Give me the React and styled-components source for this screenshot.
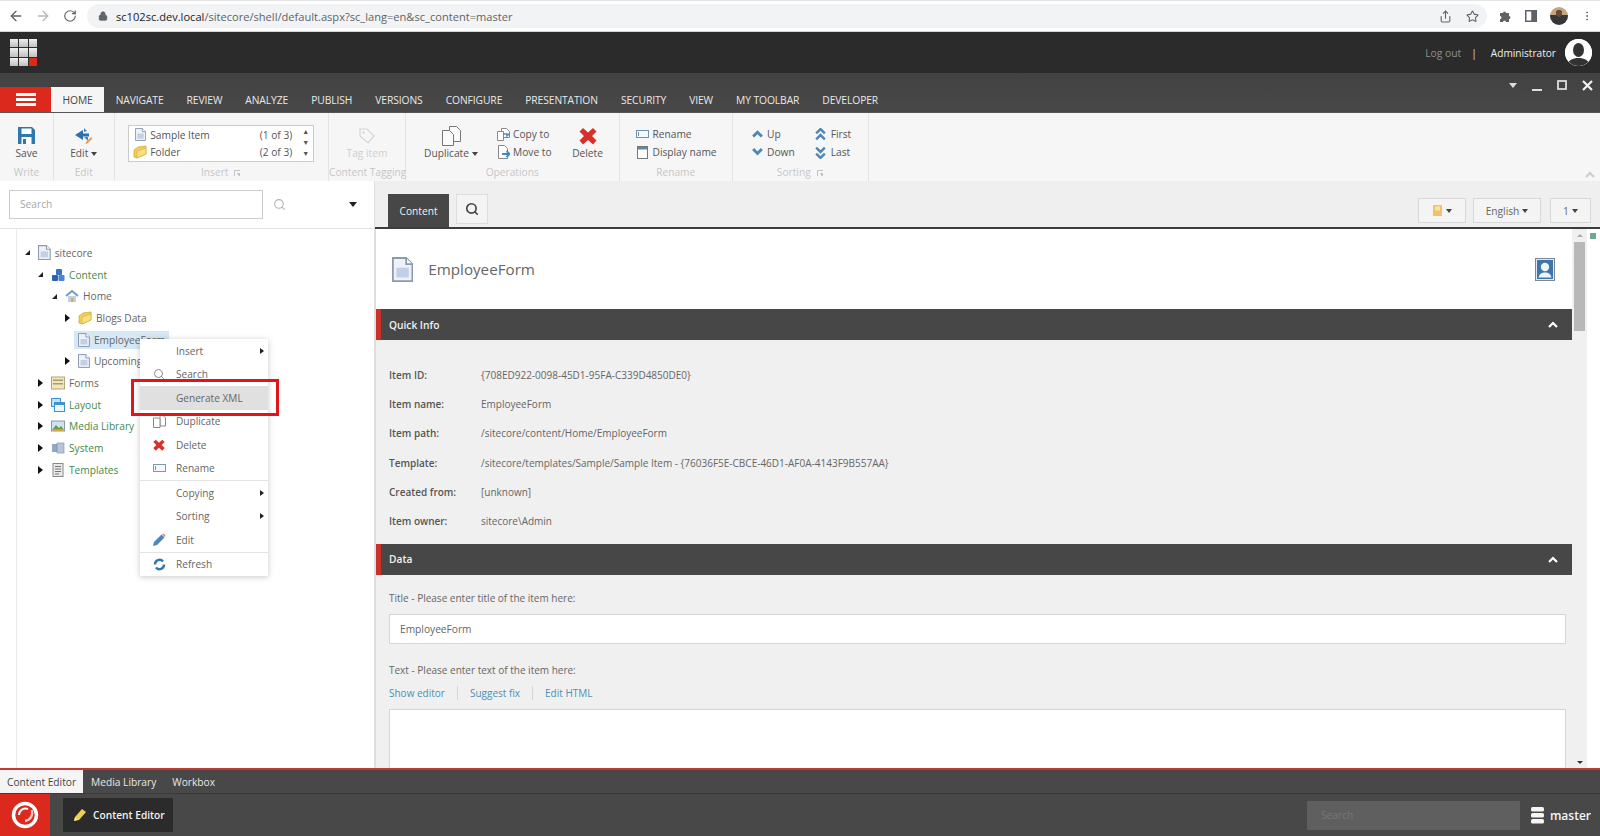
import React from "react";
import styled, { createGlobalStyle } from "styled-components";
import { ArrowLeft, ArrowRight, RotateCw, Share, Star, MoreVertical, Search as SearchIcon, Lock } from "lucide-react";

const GlobalStyle = createGlobalStyle`
  html, body { margin: 0; padding: 0; height: 836px; overflow: hidden; background: #fff; }
  body { font-family: "Open Sans", "Liberation Sans", sans-serif; color: #555; font-size: 10.2px; }
  * { box-sizing: border-box; }
`;

const Page = styled.div`
  width: 1600px;
  height: 836px;
  display: flex;
  flex-direction: column;
  overflow: hidden;
`;

/* browser chrome */
const BrowserBar = styled.div`
  height: 32px;
  flex: none;
  display: flex;
  align-items: center;
  background: #fff;
  border-top: 1px solid #e4e4e4;
  border-bottom: 1px solid #d5d5d5;
  padding: 0 0 0 2px;
  color: #5f6368;
`;
const NavBtn = styled.div`
  width: 27px;
  display: flex;
  justify-content: center;
  color: ${(p) => (p.$off ? "#b6b8bb" : "#5f6368")};
`;
const Address = styled.div`
  width: 1400px;
  height: 24px;
  margin-left: 4px;
  background: #f1f3f4;
  border-radius: 12px;
  display: flex;
  align-items: center;
  padding: 0 8px 0 11px;
  gap: 8px;
  font-size: 11.1px;
  color: #5f6368;
  b { font-weight: 400; color: #202124; }
`;
const Url = styled.span`
  flex: 1;
`;
const AddressIcons = styled.div`
  display: flex;
  gap: 14px;
  align-items: center;
`;
const BrowserTools = styled.div`
  display: flex;
  align-items: center;
  gap: 13px;
  padding-left: 12px;
`;
const Avatar = styled.div`
  width: 18px;
  height: 18px;
  border-radius: 50%;
  background: radial-gradient(circle at 50% 35%, #6b4a38 0 22%, transparent 23%), linear-gradient(180deg, #c4a77c 0 45%, #37363b 45% 100%);
`;

/* sitecore top */
const TopBar = styled.div`
  height: 41px;
  flex: none;
  background: #2b2b2b;
  display: flex;
  align-items: center;
  padding: 0 8px 0 10px;
  color: #e6e6e6;
`;
const AppGrid = styled.div`
  width: 27px;
  height: 27px;
  display: grid;
  grid-template-columns: repeat(3, 8.4px);
  grid-template-rows: repeat(3, 8.4px);
  gap: 1px;
`;
const AppTile = styled.div`
  background: ${(p) => (p.$red ? "#dc291e" : "linear-gradient(180deg, #efefef, #c0c0c0)")};
`;
const LogOut = styled.span`
  margin-left: auto;
  color: #8f8f8f;
  font-size: 10.3px;
`;
const Pipe = styled.span`
  margin: 0 14px 0 10px;
  color: #ddd;
`;
const UserName = styled.span`
  font-size: 10.1px;
  color: #eee;
`;
const UserPic = styled.div`
  width: 27px;
  height: 27px;
  margin-left: 9px;
  border-radius: 50%;
  overflow: hidden;
  background: #fff;
  svg { display: block; }
`;

const TabBar = styled.div`
  height: 40px;
  flex: none;
  background: linear-gradient(180deg, #424242, #484848);
  border-bottom: 1px solid #555;
  position: relative;
  display: flex;
  align-items: flex-end;
`;
const Hamburger = styled.div`
  width: 51px;
  height: 25px;
  background: #dc291e;
  display: flex;
  flex-direction: column;
  justify-content: center;
  align-items: center;
  gap: 2.5px;
  i { display: block; width: 20px; height: 2.5px; background: #fff; }
`;
const RibbonTab = styled.div`
  height: 25px;
  padding: 0 11.5px;
  display: flex;
  align-items: center;
  font-size: 10.3px;
  letter-spacing: -0.1px;
  white-space: nowrap;
  color: ${(p) => (p.$active ? "#444" : "#e8e8e8")};
  background: ${(p) => (p.$active ? "#f5f5f5" : "transparent")};
`;
const WindowControls = styled.div`
  position: absolute;
  right: 7px;
  top: 4px;
  display: flex;
  align-items: center;
  height: 16px;
  gap: 15px;
  color: #e8e8e8;
`;

/* ribbon */
const Ribbon = styled.div`
  height: 68px;
  flex: none;
  background: #f6f6f6;
  display: flex;
  position: relative;
`;
const Group = styled.div`
  width: ${(p) => p.$w}px;
  flex: none;
  border-right: 1px solid #e4e4e4;
  display: flex;
  flex-direction: column;
`;
const GroupBody = styled.div`
  height: 52px;
  display: flex;
  justify-content: ${(p) => p.$justify || "center"};
  padding: ${(p) => p.$pad || "0"};
  gap: ${(p) => p.$gap || 0}px;
`;
const GroupLabel = styled.div`
  height: 16px;
  font-size: 10.2px;
  color: #c6c6c6;
  text-align: center;
  white-space: nowrap;
  line-height: 15px;
  svg { margin-left: 6px; vertical-align: -1px; }
`;
const BigButton = styled.div`
  padding-top: 12px;
  margin-left: ${(p) => p.$ml || 0}px;
  width: ${(p) => p.$w || 50}px;
  flex: none;
  display: flex;
  flex-direction: column;
  align-items: center;
  font-size: 10.2px;
  color: ${(p) => (p.$faded ? "#cfcfcf" : "#555")};
  white-space: nowrap;
  span { line-height: 15px; }
`;
const BigIcon = styled.div`
  height: 21px;
  display: flex;
  align-items: center;
`;
const Caret = styled.i`
  display: inline-block;
  width: 0;
  height: 0;
  margin-left: 3px;
  vertical-align: 1px;
  border-left: ${(p) => p.$size || 3.5}px solid transparent;
  border-right: ${(p) => p.$size || 3.5}px solid transparent;
  border-top: ${(p) => (p.$size || 3.5) + 0.5}px solid ${(p) => p.$color || "#444"};
`;
const Gallery = styled.div`
  width: 186px;
  height: 37px;
  margin-top: 12px;
  background: #fff;
  border: 1px solid #ccc;
  padding: 0 4px 0 4px;
  display: flex;
`;
const GalleryList = styled.div`
  flex: 1;
`;
const GalleryRow = styled.div`
  height: 17.5px;
  display: flex;
  align-items: center;
  gap: 3px;
  font-size: 10.2px;
  em { margin-left: auto; font-style: normal; }
`;
const GalleryArrows = styled.div`
  width: 17px;
  display: flex;
  flex-direction: column;
  align-items: flex-end;
  font-size: 7px;
  line-height: 11px;
  color: #555;
`;
const SmallCol = styled.div`
  display: flex;
  flex-direction: column;
  padding-top: 12px;
  margin-left: ${(p) => p.$ml || 0}px;
`;
const SmallBtn = styled.div`
  height: 18px;
  display: flex;
  align-items: center;
  gap: 3px;
  font-size: 10.2px;
  color: #555;
  white-space: nowrap;
`;
const IconBox = styled.span`
  width: 14px;
  display: flex;
  justify-content: center;
  flex: none;
`;
const RibbonCollapse = styled.div`
  position: absolute;
  right: 5px;
  bottom: 3px;
  line-height: 0;
`;

/* main */
const Main = styled.div`
  flex: 1;
  min-height: 0;
  display: flex;
`;
const LeftPanel = styled.div`
  width: 375px;
  flex: none;
  display: flex;
  flex-direction: column;
  background: #fff;
  border-right: 1px solid #e0e0e0;
`;
const SearchRow = styled.div`
  height: 48px;
  flex: none;
  display: flex;
  align-items: center;
  padding: 0 0 1px 9px;
  border-bottom: 1px solid #e2e2e2;
`;
const TreeSearch = styled.input`
  width: 254px;
  height: 29px;
  border: 1px solid #ccc;
  padding: 0 10px;
  font: 10.2px "Open Sans", sans-serif;
  background: #fff;
  &::placeholder { color: #a8a8a8; }
`;
const SearchGlyph = styled.div`
  width: 32px;
  display: flex;
  justify-content: center;
  color: #b3b3b3;
`;
const DropCaret = styled.div`
  margin-left: 54px;
  width: 0;
  height: 0;
  border-left: 4.5px solid transparent;
  border-right: 4.5px solid transparent;
  border-top: 5px solid #222;
`;
const TreeArea = styled.div`
  flex: 1;
  position: relative;
  margin-left: 16px;
  border-left: 1px solid #eaeaea;
  padding-top: 13px;
`;
const TreeRow = styled.div`
  height: 21.7px;
  display: flex;
  align-items: center;
  padding-left: ${(p) => p.$indent}px;
`;
const Toggle = styled.span`
  width: 9px;
  flex: none;
  display: flex;
  align-items: center;
  justify-content: flex-start;
`;
const TreeNode = styled.div`
  display: flex;
  align-items: center;
  gap: 4px;
  height: 18px;
  padding: 0 4px;
  font-size: 10.2px;
  white-space: nowrap;
  color: ${(p) => (p.$green ? "#3f8a4a" : "#666")};
  background: ${(p) => (p.$selected ? "#d6e8f5" : "transparent")};
`;
const Expanded = styled.i`
  display: block;
  width: 0;
  height: 0;
  border-left: 5px solid transparent;
  border-bottom: 5px solid #222;
`;
const Collapsed = styled.i`
  display: block;
  width: 0;
  height: 0;
  border-top: 4.5px solid transparent;
  border-bottom: 4.5px solid transparent;
  border-left: 5px solid #111;
`;

/* context menu */
const Menu = styled.div`
  position: absolute;
  left: 123px;
  top: 110px;
  width: 128px;
  background: #fff;
  box-shadow: 0 1px 6px rgba(0, 0, 0, 0.22);
  z-index: 5;
`;
const MenuItem = styled.div`
  height: 23.5px;
  display: flex;
  align-items: center;
  position: relative;
  font-size: 10.1px;
  color: #666;
  background: ${(p) => (p.$hover ? "#e0e0e0" : "transparent")};
`;
const MenuText = styled.span`
  margin-left: 36px;
`;
const MenuIcon = styled.span`
  position: absolute;
  left: 11px;
  width: 16px;
  display: flex;
  justify-content: center;
`;
const MenuArrow = styled.i`
  position: absolute;
  right: 4px;
  border-top: 3.5px solid transparent;
  border-bottom: 3.5px solid transparent;
  border-left: 4px solid #222;
`;
const MenuSep = styled.div`
  height: 1px;
  background: #e4e4e4;
`;
const Highlight = styled.div`
  position: absolute;
  left: -9px;
  top: 40px;
  width: 148px;
  height: 37px;
  border: 3.5px solid #e0141a;
  pointer-events: none;
`;

/* right */
const RightPanel = styled.div`
  flex: 1;
  min-width: 0;
  display: flex;
  flex-direction: column;
`;
const EditorStrip = styled.div`
  height: 48px;
  flex: none;
  background: #efefef;
  border-bottom: 2px solid #3d3d3d;
  display: flex;
  padding: 13px 9px 0 13px;
`;
const ContentTab = styled.div`
  width: 61px;
  height: 33px;
  background: #474747;
  color: #f0f0f0;
  font-size: 10.2px;
  display: flex;
  align-items: center;
  justify-content: center;
`;
const SearchTab = styled.div`
  width: 32px;
  height: 30px;
  margin-left: 7px;
  background: #f4f4f4;
  border: 1px solid #ddd;
  display: flex;
  align-items: center;
  justify-content: center;
  color: #444;
`;
const StripBtn = styled.div`
  width: ${(p) => p.$w}px;
  height: 25px;
  margin: 4px 0 0 ${(p) => p.$ml}px;
  background: #f4f4f4;
  border: 1px solid #d8d8d8;
  display: flex;
  align-items: center;
  justify-content: center;
  font-size: 10.2px;
  color: #666;
`;
const EditorBody = styled.div`
  flex: 1;
  min-height: 0;
  display: flex;
`;
const Scroller = styled.div`
  flex: 1;
  min-width: 0;
  overflow: hidden;
  background: #f0f0f0;
  border-left: 1px solid #ddd;
`;
const ItemHeader = styled.div`
  height: 80px;
  background: #fff;
  display: flex;
  align-items: center;
  padding: 0 17px 0 16px;
`;
const ItemTitle = styled.div`
  font-size: 15.2px;
  color: #666;
  margin-left: 15px;
`;
const Portrait = styled.div`
  margin-left: auto;
  line-height: 0;
`;
const SectionBar = styled.div`
  height: 31px;
  background: #474747;
  border-left: 5px solid #c9302c;
  display: flex;
  align-items: center;
  justify-content: space-between;
  padding: 0 14px 0 8px;
  color: #f2f2f2;
  font-size: 10.2px;
  font-weight: 600;
`;
const InfoTable = styled.div`
  padding: 20px 13px 8px;
`;
const InfoRow = styled.div`
  height: 29.3px;
  display: flex;
  align-items: center;
  font-size: 10px;
  color: #666;
`;
const InfoKey = styled.div`
  width: 92px;
  font-weight: 600;
  color: #555;
`;
const Fields = styled.div`
  padding: 14px 6px 0 13px;
`;
const FieldLabel = styled.div`
  height: 18px;
  font-size: 10px;
  color: #666;
  display: flex;
  align-items: center;
`;
const TextField = styled.div`
  height: 30px;
  margin: 7px 0 17px;
  background: #fff;
  border: 1px solid #d5d5d5;
  padding: 0 10px;
  display: flex;
  align-items: center;
  font-size: 10.2px;
  color: #666;
`;
const FieldLinks = styled.div`
  display: flex;
  height: 16px;
  margin-top: 6px;
  align-items: center;
  font-size: 10px;
  color: #4a90b8;
`;
const FieldLink = styled.span`
  padding-right: 12px;
  margin-right: 12px;
  border-right: ${(p) => (p.$last ? "none" : "1px solid #d5d5d5")};
`;
const TextArea = styled.div`
  height: 80px;
  margin-top: 8px;
  background: #fff;
  border: 1px solid #d5d5d5;
`;
const Scrollbar = styled.div`
  width: 15px;
  flex: none;
  background: #f0f0f0;
  display: flex;
  flex-direction: column;
  align-items: center;
  position: relative;
  padding-top: 5px;
`;
const ScrollThumb = styled.div`
  width: 11px;
  height: 89px;
  margin-top: 5px;
  background: #b8b8b8;
`;
const ScrollArrow = styled.i`
  display: block;
  border-left: 3px solid transparent;
  border-right: 3px solid transparent;
  ${(p) => (p.$down ? "border-top: 3px solid #333; position: absolute; bottom: 4px;" : "border-bottom: 3px solid #aaa;")}
`;
const Validator = styled.div`
  width: 13px;
  flex: none;
  background: #fff;
  padding: 4px 0 0 3px;
`;
const ValidBox = styled.div`
  width: 6px;
  height: 6px;
  background: #6ea88f;
`;

/* bottom */
const TaskTabs = styled.div`
  height: 26px;
  flex: none;
  background: #484848;
  border-top: 2px solid #c13a33;
  display: flex;
  border-bottom: 1px solid #3a3a3a;
`;
const TaskTab = styled.div`
  padding: 0 ${(p) => (p.$active ? 7 : 8)}px;
  display: flex;
  align-items: center;
  font-size: 10.2px;
  color: ${(p) => (p.$active ? "#444" : "#e8e8e8")};
  background: ${(p) => (p.$active ? "#f5f5f5" : "transparent")};
`;
const TaskBar = styled.div`
  height: 42px;
  flex: none;
  background: #484848;
  display: flex;
  align-items: center;
`;
const StartBtn = styled.div`
  width: 50px;
  height: 42px;
  background: #dc291e;
  display: flex;
  align-items: center;
  justify-content: center;
`;
const RunningApp = styled.div`
  width: 110px;
  height: 34px;
  margin-left: 13px;
  background: #2b2b2b;
  border-radius: 1px;
  display: flex;
  align-items: center;
  gap: 6px;
  padding-left: 10px;
  color: #f2f2f2;
  font-size: 10.2px;
  font-weight: 600;
`;
const TaskSearch = styled.div`
  width: 213px;
  height: 29px;
  margin-left: auto;
  background: #5f5f5f;
  border-radius: 1px;
  color: #777;
  font-size: 10.2px;
  display: flex;
  align-items: center;
  padding-left: 14px;
`;
const DbName = styled.div`
  display: flex;
  align-items: center;
  gap: 5px;
  margin: 0 9px 0 11px;
  color: #f5f5f5;
  font-size: 12px;
  font-weight: 600;
`;

/* drawings */
const DocIcon = ({ size = 14 }) => (
  <svg width={size * 0.85} height={size} viewBox="0 0 12 14">
    <path d="M.5.5h7.5l3.5 3.5v9.500H.5z" fill="#eef2f8" stroke="#8a9ab0" />
    <path d="M8 .5V4h3.500" fill="#fff" stroke="#8a9ab0" />
    <rect x="2.500" y="6" width="7" height="5.500" fill="#c3cfe6" />
  </svg>
);
const FolderIcon = () => (
  <svg width="14" height="14" viewBox="0 0 14 14">
    <path d="M1 5l4-3 8-1v8l-9 4-3-1z" fill="#f1cf58" stroke="#c9a32e" strokeWidth=".7" />
    <path d="M4 6l9-3v6l-9 4z" fill="#f8e07e" stroke="#c9a32e" strokeWidth=".5" />
  </svg>
);
const ContentIcon = () => (
  <svg width="14" height="14" viewBox="0 0 14 14">
    <rect x="5" y="1" width="6" height="6" rx="1" fill="#3a72c4" />
    <rect x="1" y="7" width="6" height="6" rx="1" fill="#2f62ae" />
    <rect x="7.500" y="7" width="6" height="6" rx="1" fill="#4a86d4" />
  </svg>
);
const HomeIcon = () => (
  <svg width="14" height="14" viewBox="0 0 14 14">
    <path d="M1 7l6-5 6 5" fill="none" stroke="#6e9cc4" strokeWidth="2" />
    <rect x="3" y="7" width="8" height="6" fill="#bcd2e6" />
    <rect x="6" y="9" width="2.500" height="4" fill="#e6a35c" />
  </svg>
);
const FormsIcon = () => (
  <svg width="14" height="14" viewBox="0 0 14 14">
    <rect x=".5" y="1" width="13" height="12" fill="#f1e6c0" stroke="#b3a677" />
    <rect x="2" y="3.500" width="10" height="1.500" fill="#a99c6c" />
    <rect x="2" y="7" width="10" height="1.500" fill="#a99c6c" />
  </svg>
);
const LayoutIcon = () => (
  <svg width="14" height="14" viewBox="0 0 14 14">
    <rect x=".5" y=".5" width="9" height="8" fill="#bfe0f6" stroke="#3f93d2" />
    <rect x="3.500" y="4.500" width="10" height="9" fill="#e9f5fd" stroke="#3f93d2" />
    <rect x="3.500" y="4.500" width="10" height="2.500" fill="#3f93d2" />
  </svg>
);
const MediaIcon = () => (
  <svg width="14" height="14" viewBox="0 0 14 14">
    <rect x=".5" y="2" width="13" height="10" fill="#cfe3ee" stroke="#8c9aa5" />
    <path d="M1 11l4-5 3 3 2-2 3 4z" fill="#6a9a4a" />
    <rect x="2" y="10" width="10" height="2" fill="#d9a03f" />
  </svg>
);
const SystemIcon = () => (
  <svg width="14" height="14" viewBox="0 0 14 14">
    <rect x="1" y="3" width="9" height="8" fill="#8fa9c4" />
    <rect x="6" y="2" width="7" height="10" fill="#b7c6d6" stroke="#7a8ea4" strokeWidth=".6" />
  </svg>
);
const TemplateIcon = () => (
  <svg width="14" height="14" viewBox="0 0 14 14">
    <rect x="2" y=".5" width="10" height="13" fill="#e8e8e8" stroke="#888" />
    <path d="M4 3.500h6M4 6h6M4 8.500h6M4 11h4" stroke="#777" />
  </svg>
);
const SaveIcon = () => (
  <svg width="17" height="17" viewBox="0 0 17 17">
    <path d="M0 0h14l3 3v14H0z" fill="#2f78ad" />
    <rect x="3.500" y="1.500" width="10" height="5.500" fill="#fff" />
    <rect x="3.500" y="10" width="10" height="7" fill="#fff" />
    <rect x="5" y="12" width="3" height="5" fill="#2f78ad" />
  </svg>
);
const EditIcon = () => (
  <svg width="20" height="18" viewBox="0 0 20 18">
    <path d="M1 8l8-5v3.500h6v3H9l0 3.500z" fill="#2f6fb0" />
    <path d="M10 1l3 3-3 1zM10 10h4v4z" fill="#3f86c6" />
    <path d="M12 15l5-5 1.500 1.500-5 5-2 .5z" fill="#e6a05a" />
  </svg>
);
const TagIcon = () => (
  <svg width="16" height="16" viewBox="0 0 16 16">
    <path d="M1 1h7l7 7-6 7-8-7z" fill="none" stroke="#d6d6d6" strokeWidth="1.200" />
    <circle cx="4.500" cy="4.500" r="1.200" fill="#d6d6d6" />
  </svg>
);
const DupIcon = () => (
  <svg width="19" height="20" viewBox="0 0 19 20" fill="#fafafa" stroke="#777">
    <path d="M7.500.5h7l4 4v11h-11z" />
    <path d="M.5 4.500h7l4 4v11h-11z" />
  </svg>
);
const CopyIcon = () => (
  <svg width="13" height="13" viewBox="0 0 13 13">
    <path d="M4.500.5h5l3 3v6h-8z" fill="#fff" stroke="#888" />
    <path d="M.5 3.500h6v9h-6z" fill="#fff" stroke="#888" />
    <path d="M6 6h4v2l3-3" fill="none" stroke="#4a90c4" strokeWidth="1.500" />
  </svg>
);
const MoveIcon = () => (
  <svg width="13" height="14" viewBox="0 0 13 14">
    <path d="M1.500.5h6l3 3v10h-9z" fill="#fff" stroke="#888" />
    <path d="M5 9h8M9.500 6l3 3-3 3" fill="none" stroke="#3f86c6" strokeWidth="1.800" />
  </svg>
);
const DeleteIcon = ({ size = 18 }) => (
  <svg width={size} height={size} viewBox="0 0 18 18">
    <path d="M4 1l5 4.500L14 1l3.500 3.500L13 9l4.500 4.500L14 17.500 9 13l-5 4.500L.5 13.500 5 9 .5 4.500z" fill="#d9312a" />
  </svg>
);
const RenameIcon = ({ color = "#6e93ad" }) => (
  <svg width="13" height="8" viewBox="0 0 13 8">
    <rect x=".5" y=".5" width="12" height="7" fill="#f4f8fb" stroke={color} />
    <rect x="2" y="2" width="1" height="4" fill={color} />
  </svg>
);
const DisplayIcon = () => (
  <svg width="11" height="13" viewBox="0 0 11 13">
    <rect x=".5" y=".5" width="10" height="12" fill="#fff" stroke="#777" />
    <rect x="1" y="1" width="9" height="2.500" fill="#5d87ad" />
  </svg>
);
const Chevron = ({ dir = "up", color = "#4e86b8", size = 11, width = 2.600 }) => (
  <svg width={size} height={size * 0.7} viewBox="0 0 10 7">
    <path d={dir === "up" ? "M1 6l4-4 4 4" : "M1 1l4 4 4-4"} fill="none" stroke={color} strokeWidth={width} />
  </svg>
);
const DoubleChevron = ({ dir }) => (
  <svg width="11" height="13" viewBox="0 0 10 12">
    <path d={dir === "up" ? "M1 5l4-4 4 4M1 10.500l4-4 4 4" : "M1 1.500l4 4 4-4M1 7l4 4 4-4"} fill="none" stroke="#4e86b8" strokeWidth="2.200" />
  </svg>
);
const Launcher = () => (
  <svg width="7" height="7" viewBox="0 0 7 7">
    <path d="M.5 6V.5H6" fill="none" stroke="#c2c2c2" />
    <path d="M3 3h3v3H4.500z" fill="#c2c2c2" />
  </svg>
);
const PersonIcon = () => (
  <svg width="27" height="27" viewBox="0 0 27 27">
    <rect width="27" height="27" fill="#fff" />
    <ellipse cx="13.500" cy="11" rx="5.500" ry="7" fill="#333" />
    <path d="M2 27c1-6 6-8 11.500-8S24 21 25 27z" fill="#333" />
  </svg>
);
const PortraitIcon = () => (
  <svg width="20" height="23" viewBox="0 0 20 23">
    <rect x=".5" y=".5" width="19" height="22" fill="#dfeaf5" stroke="#7a8794" />
    <rect x="2" y="2" width="16" height="19" fill="#3e76ac" />
    <circle cx="10" cy="9" r="4.200" fill="#f2f6fa" />
    <path d="M3.500 19.500c1-4 3.500-5 6.500-5s5.500 1 6.500 5z" fill="#f2f6fa" />
  </svg>
);
const PencilIcon = ({ color = "#f0cf4a", size = 14 }) => (
  <svg width={size} height={size} viewBox="0 0 14 14">
    <path d="M1 13l1-4 7-8 4 3-7 8z" fill={color} />
    <path d="M1 13l1-4 3 2.500z" fill="#f6e4b0" />
  </svg>
);
const EditPen = () => (
  <svg width="14" height="14" viewBox="0 0 14 14">
    <path d="M1 13l1-4 7.500-7.500 3 3L5 12z" fill="#4c86c4" />
    <path d="M10 1l3 3 .5-1.500L11.500.5z" fill="#d77" />
  </svg>
);
const RefreshIcon = () => (
  <svg width="13" height="13" viewBox="0 0 13 13" fill="none" stroke="#2f78ad" strokeWidth="2.400">
    <path d="M2 6.500a4.500 4.500 0 0 1 8-3" />
    <path d="M11 6.500a4.500 4.500 0 0 1-8 3" />
  </svg>
);
const DuplicateMini = () => (
  <svg width="13" height="13" viewBox="0 0 13 13" fill="#fff" stroke="#888">
    <path d="M7 .5h3l2.500 2.500v8H7z" />
    <path d="M.5 3h5l1.500 1.500v8H.5z" />
  </svg>
);
const SitecoreLogo = () => (
  <svg width="28" height="28" viewBox="0 0 28 28" fill="none" stroke="#fff">
    <circle cx="14" cy="14" r="11.500" strokeWidth="3.500" />
    <path d="M8 14a6.500 6.500 0 0 1 9-6" strokeWidth="2" />
    <path d="M21 9c1 5-1 10-7 11" strokeWidth="2.500" stroke="#f6c9c5" />
  </svg>
);
const DbIcon = () => (
  <svg width="14" height="17" viewBox="0 0 14 17" fill="#f5f5f5">
    <rect x="0" y="0" width="13" height="4.500" rx="1.500" />
    <rect x="0" y="6" width="13" height="4.500" rx="1.500" />
    <rect x="0" y="12" width="13" height="4.500" rx="1.500" />
  </svg>
);
const NotebookIcon = () => (
  <svg width="11" height="11" viewBox="0 0 11 11">
    <rect x="1" y="0" width="9" height="11" fill="#f3c266" />
    <rect x="3" y="1.500" width="5" height="4" fill="#fbe3b0" />
  </svg>
);

const tabs = ["NAVIGATE", "REVIEW", "ANALYZE", "PUBLISH", "VERSIONS", "CONFIGURE", "PRESENTATION", "SECURITY", "VIEW", "MY TOOLBAR", "DEVELOPER"];

const tree = [
  { indent: 8, open: true, icon: <DocIcon size={15} />, label: "sitecore" },
  { indent: 21, open: true, icon: <ContentIcon />, label: "Content", green: true },
  { indent: 35, open: true, icon: <HomeIcon />, label: "Home" },
  { indent: 48, closed: true, icon: <FolderIcon />, label: "Blogs Data" },
  { indent: 48, icon: <DocIcon size={14} />, label: "EmployeeForm", selected: true },
  { indent: 48, closed: true, icon: <DocIcon size={14} />, label: "Upcoming Events" },
  { indent: 21, closed: true, icon: <FormsIcon />, label: "Forms" },
  { indent: 21, closed: true, icon: <LayoutIcon />, label: "Layout", green: true },
  { indent: 21, closed: true, icon: <MediaIcon />, label: "Media Library", green: true },
  { indent: 21, closed: true, icon: <SystemIcon />, label: "System", green: true },
  { indent: 21, closed: true, icon: <TemplateIcon />, label: "Templates", green: true },
];

const info = [
  ["Item ID:", "{708ED922-0098-45D1-95FA-C339D4850DE0}"],
  ["Item name:", "EmployeeForm"],
  ["Item path:", "/sitecore/content/Home/EmployeeForm"],
  ["Template:", "/sitecore/templates/Sample/Sample Item - {76036F5E-CBCE-46D1-AF0A-4143F9B557AA}"],
  ["Created from:", "[unknown]"],
  ["Item owner:", "sitecore\\Admin"],
];

const App = () => {
  return (
    <Page>
      <GlobalStyle />
      <BrowserBar>
        <NavBtn><ArrowLeft size={16} /></NavBtn>
        <NavBtn $off><ArrowRight size={16} /></NavBtn>
        <NavBtn><RotateCw size={14} /></NavBtn>
        <Address>
          <Lock size={10} fill="#5f6368" />
          <Url><b>sc102sc.dev.local</b>/sitecore/shell/default.aspx?sc_lang=en&amp;sc_content=master</Url>
          <AddressIcons>
            <Share size={13} />
            <Star size={13} />
          </AddressIcons>
        </Address>
        <BrowserTools>
          <svg width="13" height="13" viewBox="0 0 13 13" fill="#5f6368"><path d="M1 3h3a1.500 1.500 0 0 1 3 0h3v3a1.500 1.500 0 0 1 0 3v3H7a1.500 1.500 0 0 0-3 0H1V9a1.500 1.500 0 0 0 0-3z" /></svg>
          <svg width="12" height="12" viewBox="0 0 12 12" fill="none" stroke="#5f6368" strokeWidth="1.500"><rect x=".75" y=".75" width="10.500" height="10.500" /><rect x="7" y="1" width="4" height="10" fill="#5f6368" /></svg>
          <Avatar />
          <MoreVertical size={12} />
        </BrowserTools>
      </BrowserBar>

      <TopBar>
        <AppGrid>
          {[0, 1, 2, 3, 4, 5, 6, 7].map((i) => <AppTile key={i} />)}
          <AppTile $red />
        </AppGrid>
        <LogOut>Log out</LogOut>
        <Pipe>|</Pipe>
        <UserName>Administrator</UserName>
        <UserPic><PersonIcon /></UserPic>
      </TopBar>

      <TabBar>
        <Hamburger><i /><i /><i /></Hamburger>
        <RibbonTab $active>HOME</RibbonTab>
        {tabs.map((t) => <RibbonTab key={t}>{t}</RibbonTab>)}
        <WindowControls>
          <Caret $color="#ddd" $size={4.5} />
          <svg width="10" height="12" viewBox="0 0 10 12"><rect y="10" width="10" height="2" fill="#ddd" /></svg>
          <svg width="10" height="10" viewBox="0 0 10 10" fill="none" stroke="#ddd" strokeWidth="1.800"><rect x="1" y="1" width="8" height="8" /></svg>
          <svg width="11" height="11" viewBox="0 0 11 11" stroke="#f2f2f2" strokeWidth="2.200"><path d="M1 1l9 9M10 1l-9 9" /></svg>
        </WindowControls>
      </TabBar>

      <Ribbon>
        <Group $w={54}>
          <GroupBody><BigButton><BigIcon><SaveIcon /></BigIcon><span>Save</span></BigButton></GroupBody>
          <GroupLabel>Write</GroupLabel>
        </Group>
        <Group $w={60.5}>
          <GroupBody><BigButton><BigIcon><EditIcon /></BigIcon><span>Edit<Caret /></span></BigButton></GroupBody>
          <GroupLabel>Edit</GroupLabel>
        </Group>
        <Group $w={214.5}>
          <GroupBody>
            <Gallery>
              <GalleryList>
                <GalleryRow><IconBox><DocIcon size={13} /></IconBox>Sample Item<em>(1 of 3)</em></GalleryRow>
                <GalleryRow><IconBox><FolderIcon /></IconBox>Folder<em>(2 of 3)</em></GalleryRow>
              </GalleryList>
              <GalleryArrows><span>▲</span><span>▼</span><span>▼</span></GalleryArrows>
            </Gallery>
          </GroupBody>
          <GroupLabel>Insert<Launcher /></GroupLabel>
        </Group>
        <Group $w={77}>
          <GroupBody><BigButton $faded><BigIcon><TagIcon /></BigIcon><span>Tag item</span></BigButton></GroupBody>
          <GroupLabel>Content Tagging</GroupLabel>
        </Group>
        <Group $w={213.5}>
          <GroupBody $justify="flex-start" $pad="0 0 0 15px">
            <BigButton $w={60}><BigIcon><DupIcon /></BigIcon><span>Duplicate<Caret /></span></BigButton>
            <SmallCol $ml={15}>
              <SmallBtn><IconBox><CopyIcon /></IconBox>Copy to</SmallBtn>
              <SmallBtn><IconBox><MoveIcon /></IconBox>Move to</SmallBtn>
            </SmallCol>
            <BigButton $w={50} $ml={11}><BigIcon><DeleteIcon /></BigIcon><span>Delete</span></BigButton>
          </GroupBody>
          <GroupLabel>Operations</GroupLabel>
        </Group>
        <Group $w={113.5}>
          <GroupBody $justify="flex-start" $pad="0 0 0 16px">
            <SmallCol>
              <SmallBtn><IconBox><RenameIcon /></IconBox>Rename</SmallBtn>
              <SmallBtn><IconBox><DisplayIcon /></IconBox>Display name</SmallBtn>
            </SmallCol>
          </GroupBody>
          <GroupLabel>Rename</GroupLabel>
        </Group>
        <Group $w={135.5}>
          <GroupBody $justify="flex-start" $pad="0 0 0 17px" $gap={19}>
            <SmallCol>
              <SmallBtn><IconBox><Chevron dir="up" /></IconBox>Up</SmallBtn>
              <SmallBtn><IconBox><Chevron dir="down" /></IconBox>Down</SmallBtn>
            </SmallCol>
            <SmallCol>
              <SmallBtn><IconBox><DoubleChevron dir="up" /></IconBox>First</SmallBtn>
              <SmallBtn><IconBox><DoubleChevron dir="down" /></IconBox>Last</SmallBtn>
            </SmallCol>
          </GroupBody>
          <GroupLabel>Sorting<Launcher /></GroupLabel>
        </Group>
        <RibbonCollapse><Chevron dir="up" color="#ccc" size={10} width={2} /></RibbonCollapse>
      </Ribbon>

      <Main>
        <LeftPanel>
          <SearchRow>
            <TreeSearch placeholder="Search" readOnly />
            <SearchGlyph><SearchIcon size={13} /></SearchGlyph>
            <DropCaret />
          </SearchRow>
          <TreeArea>
            {tree.map((n) => (
              <TreeRow key={n.label} $indent={n.indent}>
                <Toggle>{n.open && <Expanded />}{n.closed && <Collapsed />}</Toggle>
                <TreeNode $green={n.green} $selected={n.selected}>{n.icon}{n.label}</TreeNode>
              </TreeRow>
            ))}
            <Menu>
              <MenuItem><MenuText>Insert</MenuText><MenuArrow /></MenuItem>
              <MenuItem><MenuIcon><SearchIcon size={12} color="#888" /></MenuIcon><MenuText>Search</MenuText></MenuItem>
              <MenuItem $hover><MenuText>Generate XML</MenuText></MenuItem>
              <MenuItem><MenuIcon><DuplicateMini /></MenuIcon><MenuText>Duplicate</MenuText></MenuItem>
              <MenuItem><MenuIcon><DeleteIcon size={12} /></MenuIcon><MenuText>Delete</MenuText></MenuItem>
              <MenuItem><MenuIcon><RenameIcon color="#7a9aa8" /></MenuIcon><MenuText>Rename</MenuText></MenuItem>
              <MenuSep />
              <MenuItem><MenuText>Copying</MenuText><MenuArrow /></MenuItem>
              <MenuItem><MenuText>Sorting</MenuText><MenuArrow /></MenuItem>
              <MenuItem><MenuIcon><EditPen /></MenuIcon><MenuText>Edit</MenuText></MenuItem>
              <MenuSep />
              <MenuItem><MenuIcon><RefreshIcon /></MenuIcon><MenuText>Refresh</MenuText></MenuItem>
              <Highlight />
            </Menu>
          </TreeArea>
        </LeftPanel>

        <RightPanel>
          <EditorStrip>
            <ContentTab>Content</ContentTab>
            <SearchTab><SearchIcon size={14} strokeWidth={2.8} /></SearchTab>
            <StripBtn $w={48} $ml={930}><NotebookIcon /><Caret /></StripBtn>
            <StripBtn $w={68} $ml={7}>English<Caret /></StripBtn>
            <StripBtn $w={41} $ml={9}>1<Caret /></StripBtn>
          </EditorStrip>
          <EditorBody>
            <Scroller>
              <ItemHeader>
                <DocIcon size={25} />
                <ItemTitle>EmployeeForm</ItemTitle>
                <Portrait><PortraitIcon /></Portrait>
              </ItemHeader>
              <SectionBar>Quick Info<Chevron dir="up" color="#fff" size={10} width={2.200} /></SectionBar>
              <InfoTable>
                {info.map(([k, v]) => (
                  <InfoRow key={k}><InfoKey>{k}</InfoKey>{v}</InfoRow>
                ))}
              </InfoTable>
              <SectionBar>Data<Chevron dir="up" color="#fff" size={10} width={2.200} /></SectionBar>
              <Fields>
                <FieldLabel>Title - Please enter title of the item here:</FieldLabel>
                <TextField>EmployeeForm</TextField>
                <FieldLabel>Text - Please enter text of the item here:</FieldLabel>
                <FieldLinks>
                  <FieldLink>Show editor</FieldLink>
                  <FieldLink>Suggest fix</FieldLink>
                  <FieldLink $last>Edit HTML</FieldLink>
                </FieldLinks>
                <TextArea />
              </Fields>
            </Scroller>
            <Scrollbar>
              <ScrollArrow />
              <ScrollThumb />
              <ScrollArrow $down />
            </Scrollbar>
            <Validator><ValidBox /></Validator>
          </EditorBody>
        </RightPanel>
      </Main>

      <TaskTabs>
        <TaskTab $active>Content Editor</TaskTab>
        <TaskTab>Media Library</TaskTab>
        <TaskTab>Workbox</TaskTab>
      </TaskTabs>
      <TaskBar>
        <StartBtn><SitecoreLogo /></StartBtn>
        <RunningApp><PencilIcon />Content Editor</RunningApp>
        <TaskSearch>Search</TaskSearch>
        <DbName><DbIcon />master</DbName>
      </TaskBar>
    </Page>
  );
};

export default App;
